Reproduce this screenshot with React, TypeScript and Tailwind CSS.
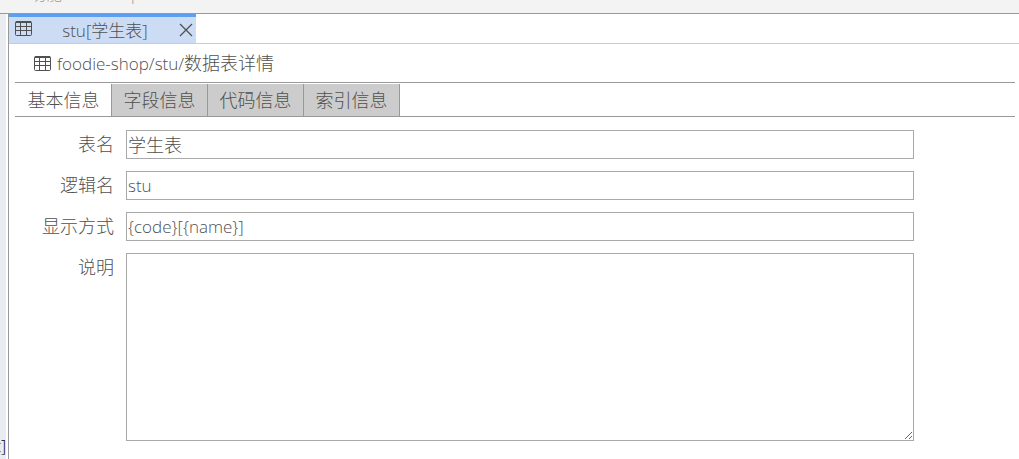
import { useState, type ReactNode } from "react";

function TableIcon() {
  return (
    <svg width="17" height="15" viewBox="0 0 17 15" fill="none" stroke="currentColor" aria-hidden="true" className="shrink-0">
      <rect x="0.5" y="0.5" width="16" height="14" rx="1" />
      <path d="M1 1h15" strokeWidth="2" />
      <path d="M0.5 5.5h16M0.5 9.5h16M5.5 1v13.5M11.5 1v13.5" />
    </svg>
  );
}

const tabs = ["基本信息", "字段信息", "代码信息", "索引信息"];

function Row({ id, label, children }: { id: string; label: string; children: ReactNode }) {
  return (
    <div className="flex items-start gap-3">
      <label htmlFor={id} className="w-[99px] shrink-0 text-right leading-7">
        {label}
      </label>
      {children}
    </div>
  );
}

const field = "min-w-0 flex-1 rounded-none border border-[#a9a9a9] bg-white px-px font-light outline-none";

export default function App() {
  const [active, setActive] = useState(0);
  return (
    <div className="flex h-screen flex-col overflow-hidden bg-white font-['Open_Sans','Noto_Sans_CJK_SC',sans-serif] text-[18px] font-light text-[#505050]">
      <header className="flex h-3.5 shrink-0 items-start overflow-hidden border-b border-[#999] bg-[#f3f3f3] pl-[30px] text-[#999]">
        <span className="-mt-4 w-[101px] text-base leading-5">功能</span>
        <span className="-mt-4 text-base leading-5">p</span>
      </header>
      <div className="flex min-h-0 flex-1">
        <aside className="flex w-1.5 shrink-0 items-end justify-end overflow-hidden bg-[#e9edf2] pb-px text-black">
          <span className="text-base leading-6">t]</span>
        </aside>
        <main className="ml-0.5 min-w-0 flex-1 border-l border-[#999]">
          <div className="flex border-b border-[#ccc]">
            <div className="flex h-[29px] w-[187px] items-center border-t-3 border-[#5c9ff0] bg-[#ccdcf5] pr-0.5 pl-1.5">
              <span className="pb-1">
                <TableIcon />
              </span>
              <span className="flex-1 pt-px text-center text-[17px] leading-6">stu[学生表]</span>
              <button type="button" aria-label="关闭" className="flex size-4 items-center justify-center">
                <svg width="14" height="14" viewBox="0 0 14 14" fill="none" stroke="currentColor" strokeWidth="1.3" aria-hidden="true">
                  <path d="M1 1l12 12M13 1L1 13" />
                </svg>
              </button>
            </div>
          </div>
          <div className="pr-1 pl-1.5">
            <h1 className="flex h-[39px] items-center gap-1.5 border-b border-[#999] pl-[19px]">
              <TableIcon />
              <span>
                <span className="text-[17px]">foodie-shop/stu/</span>数据表详情
              </span>
            </h1>
            <div role="tablist" className="flex h-[34px] border-b border-[#999] pt-px pl-px">
              {tabs.map((t, i) => (
                <button
                  key={t}
                  type="button"
                  role="tab"
                  aria-selected={i === active}
                  onClick={() => setActive(i)}
                  className={`w-24 border-r border-[#999] leading-8 ${i === active ? "bg-white" : "bg-[#ccc]"}`}
                >
                  {t}
                </button>
              ))}
            </div>
            <form className="flex flex-col gap-3 pt-[13px] pr-[101px]">
              <Row id="name" label="表名">
                <input id="name" defaultValue="学生表" className={`${field} h-[29px] pb-0.5`} />
              </Row>
              <Row id="code" label="逻辑名">
                <input id="code" defaultValue="stu" className={`${field} h-[29px] text-[17px]`} />
              </Row>
              <Row id="display" label="显示方式">
                <input id="display" defaultValue="{code}[{name}]" className={`${field} h-[29px] text-[17px]`} />
              </Row>
              <Row id="note" label="说明">
                <textarea id="note" className={`${field} h-[188px] resize`} />
              </Row>
            </form>
          </div>
        </main>
      </div>
    </div>
  );
}
